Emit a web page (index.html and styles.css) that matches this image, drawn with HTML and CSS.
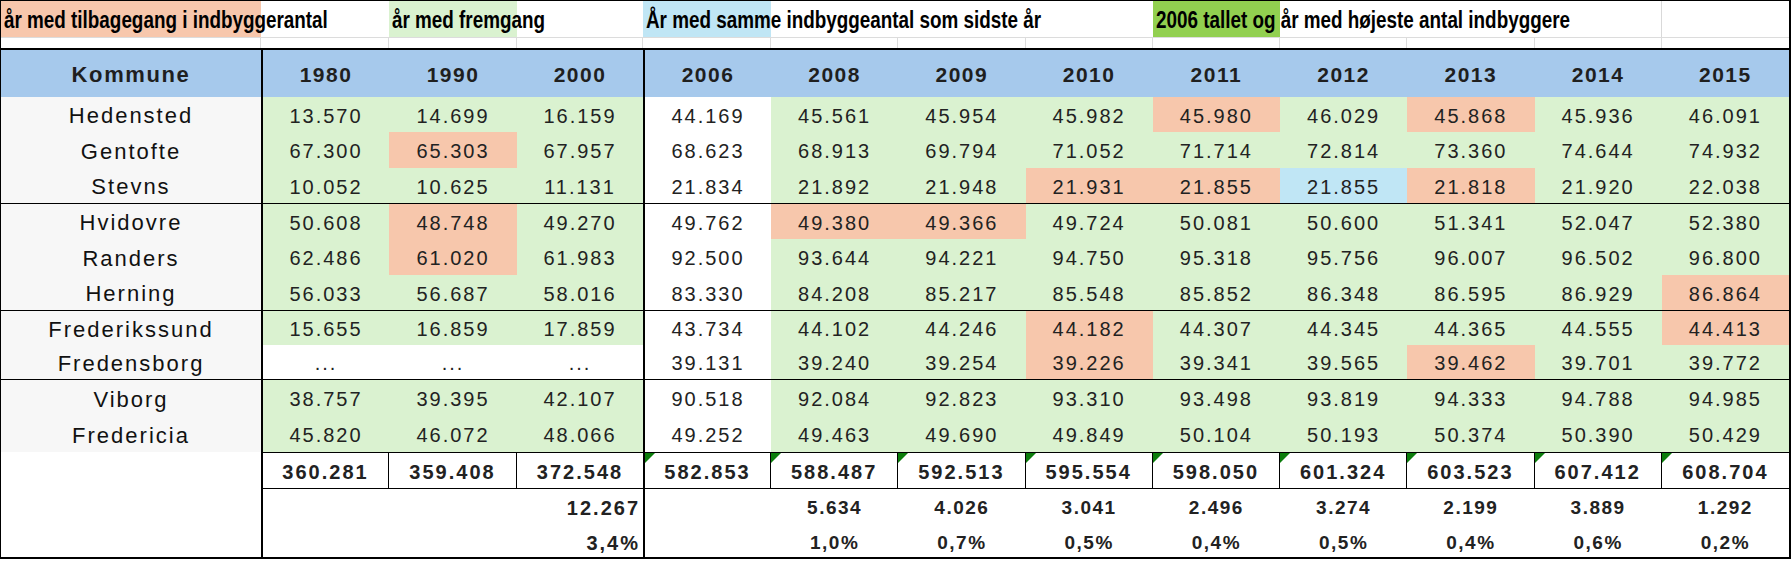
FILE: index.html
```html
<!DOCTYPE html>
<html lang="da">
<head>
<meta charset="utf-8">
<title>Indbyggertal</title>
<link rel="stylesheet" href="styles.css">
</head>
<body>
<div class="sheet">
  <div class="row legend">
    <div class="c lg fill-o"><span class="lt">år med tilbagegang i indbyggerantal</span></div>
    <div class="c lg"></div>
    <div class="c lg fill-g"><span class="lt">år med fremgang</span></div>
    <div class="c lg"></div>
    <div class="c lg fill-b"><span class="lt">År med samme indbyggeantal som sidste år</span></div>
    <div class="c lg"></div>
    <div class="c lg"></div>
    <div class="c lg"></div>
    <div class="c lg fill-bg"><span class="lt">2006 tallet og år med højeste antal indbyggere</span></div>
    <div class="c lg"></div>
    <div class="c lg"></div>
    <div class="c lg grid-r"></div>
    <div class="c lg"></div>
  </div>
  <div class="row gap">
    <div class="c"></div><div class="c"></div><div class="c"></div><div class="c"></div><div class="c"></div><div class="c"></div><div class="c"></div><div class="c"></div><div class="c"></div><div class="c"></div><div class="c"></div><div class="c"></div><div class="c"></div>
  </div>
  <div class="row t hd">
    <div class="c kom">Kommune</div>
    <div class="c">1980</div><div class="c">1990</div><div class="c">2000</div><div class="c">2006</div><div class="c">2008</div><div class="c">2009</div><div class="c">2010</div><div class="c">2011</div><div class="c">2012</div><div class="c">2013</div><div class="c">2014</div><div class="c">2015</div>
  </div>

  <div class="row t d h35">
    <div class="c name">Hedensted</div>
    <div class="c g">13.570</div><div class="c g">14.699</div><div class="c g">16.159</div><div class="c w">44.169</div><div class="c g">45.561</div><div class="c g">45.954</div><div class="c g">45.982</div><div class="c o">45.980</div><div class="c g">46.029</div><div class="c o">45.868</div><div class="c g">45.936</div><div class="c g">46.091</div>
  </div>
  <div class="row t d h36">
    <div class="c name">Gentofte</div>
    <div class="c g">67.300</div><div class="c o">65.303</div><div class="c g">67.957</div><div class="c w">68.623</div><div class="c g">68.913</div><div class="c g">69.794</div><div class="c g">71.052</div><div class="c g">71.714</div><div class="c g">72.814</div><div class="c g">73.360</div><div class="c g">74.644</div><div class="c g">74.932</div>
  </div>
  <div class="row t d h35">
    <div class="c name">Stevns</div>
    <div class="c g">10.052</div><div class="c g">10.625</div><div class="c g">11.131</div><div class="c w">21.834</div><div class="c g">21.892</div><div class="c g">21.948</div><div class="c o">21.931</div><div class="c o">21.855</div><div class="c b">21.855</div><div class="c o">21.818</div><div class="c g">21.920</div><div class="c g">22.038</div>
  </div>

  <div class="row t d grp h36">
    <div class="c name">Hvidovre</div>
    <div class="c g">50.608</div><div class="c o">48.748</div><div class="c g">49.270</div><div class="c w">49.762</div><div class="c o">49.380</div><div class="c o">49.366</div><div class="c g">49.724</div><div class="c g">50.081</div><div class="c g">50.600</div><div class="c g">51.341</div><div class="c g">52.047</div><div class="c g">52.380</div>
  </div>
  <div class="row t d h36">
    <div class="c name">Randers</div>
    <div class="c g">62.486</div><div class="c o">61.020</div><div class="c g">61.983</div><div class="c w">92.500</div><div class="c g">93.644</div><div class="c g">94.221</div><div class="c g">94.750</div><div class="c g">95.318</div><div class="c g">95.756</div><div class="c g">96.007</div><div class="c g">96.502</div><div class="c g">96.800</div>
  </div>
  <div class="row t d h35">
    <div class="c name">Herning</div>
    <div class="c g">56.033</div><div class="c g">56.687</div><div class="c g">58.016</div><div class="c w">83.330</div><div class="c g">84.208</div><div class="c g">85.217</div><div class="c g">85.548</div><div class="c g">85.852</div><div class="c g">86.348</div><div class="c g">86.595</div><div class="c g">86.929</div><div class="c o">86.864</div>
  </div>

  <div class="row t d grp h35">
    <div class="c name">Frederikssund</div>
    <div class="c g">15.655</div><div class="c g">16.859</div><div class="c g">17.859</div><div class="c w">43.734</div><div class="c g">44.102</div><div class="c g">44.246</div><div class="c o">44.182</div><div class="c g">44.307</div><div class="c g">44.345</div><div class="c g">44.365</div><div class="c g">44.555</div><div class="c o">44.413</div>
  </div>
  <div class="row t d h34">
    <div class="c name">Fredensborg</div>
    <div class="c w">...</div><div class="c w">...</div><div class="c w">...</div><div class="c w">39.131</div><div class="c g">39.240</div><div class="c g">39.254</div><div class="c o">39.226</div><div class="c g">39.341</div><div class="c g">39.565</div><div class="c o">39.462</div><div class="c g">39.701</div><div class="c g">39.772</div>
  </div>

  <div class="row t d grp h37">
    <div class="c name">Viborg</div>
    <div class="c g">38.757</div><div class="c g">39.395</div><div class="c g">42.107</div><div class="c w">90.518</div><div class="c g">92.084</div><div class="c g">92.823</div><div class="c g">93.310</div><div class="c g">93.498</div><div class="c g">93.819</div><div class="c g">94.333</div><div class="c g">94.788</div><div class="c g">94.985</div>
  </div>
  <div class="row t d h36">
    <div class="c name">Fredericia</div>
    <div class="c g">45.820</div><div class="c g">46.072</div><div class="c g">48.066</div><div class="c w">49.252</div><div class="c g">49.463</div><div class="c g">49.690</div><div class="c g">49.849</div><div class="c g">50.104</div><div class="c g">50.193</div><div class="c g">50.374</div><div class="c g">50.390</div><div class="c g">50.429</div>
  </div>

  <div class="row t tot">
    <div class="c blank"></div>
    <div class="c">360.281</div><div class="c">359.408</div><div class="c">372.548</div><div class="c tri">582.853</div><div class="c tri">588.487</div><div class="c tri">592.513</div><div class="c tri">595.554</div><div class="c tri">598.050</div><div class="c tri">601.324</div><div class="c tri">603.523</div><div class="c tri">607.412</div><div class="c tri">608.704</div>
  </div>
  <div class="row t diff d1">
    <div class="c"></div>
    <div class="c"></div><div class="c"></div><div class="c big">12.267</div><div class="c"></div><div class="c">5.634</div><div class="c">4.026</div><div class="c">3.041</div><div class="c">2.496</div><div class="c">3.274</div><div class="c">2.199</div><div class="c">3.889</div><div class="c">1.292</div>
  </div>
  <div class="row t diff d2">
    <div class="c"></div>
    <div class="c"></div><div class="c"></div><div class="c big">3,4%</div><div class="c"></div><div class="c">1,0%</div><div class="c">0,7%</div><div class="c">0,5%</div><div class="c">0,4%</div><div class="c">0,5%</div><div class="c">0,4%</div><div class="c">0,6%</div><div class="c">0,2%</div>
  </div>
</div>
</body>
</html>
```

FILE: styles.css
```css
html, body {
  margin: 0;
  padding: 0;
  background: #ffffff;
}

body {
  width: 1791px;
  height: 561px;
  overflow: hidden;
}

.sheet {
  width: 1791px;
  box-sizing: border-box;
  border-style: solid;
  border-color: #000;
  border-width: 1px 2px 2px 1px;
  font-family: "Liberation Sans", Arial, sans-serif;
  color: #222222;
}

.row {
  display: grid;
  grid-template-columns: 260px 128px 128px 126px 128px repeat(8, 1fr);
  box-sizing: border-box;
}

.c {
  display: flex;
  align-items: center;
  justify-content: center;
  box-sizing: border-box;
  white-space: nowrap;
  min-width: 0;
  position: relative;
}

/* legend row */
.legend {
  height: 36px;
}

.lg {
  justify-content: flex-start;
  padding: 3px 0 0 3px;
  font-family: "Liberation Sans", Arial, sans-serif;
  font-weight: bold;
  font-size: 23px;
  color: #000;
}

/* the legend font in the original is a narrow face */
.lt {
  display: inline-block;
  transform: scaleX(0.82);
  transform-origin: left center;
  position: relative;
  z-index: 1;
}

.fill-o { background: #F7C7AC; }
.fill-g { background: #DAF2D0; }
.fill-b { background: #C0E6F5; }
.fill-bg { background: #92D050; }

.grid-r {
  border-right: 1px solid #d9d9d9;
}

/* empty spacer row with excel gridlines */
.gap {
  height: 11px;
  border-top: 1px solid #dcdcdc;
}

.gap .c {
  border-right: 1px solid #dcdcdc;
}

.gap .c:last-child {
  border-right: 0;
}

/* thick column separators inside the table */
.t .c:nth-child(2),
.t .c:nth-child(5) {
  border-left: 2px solid #000;
}

/* header */
.hd {
  height: 49px;
  border-top: 2px solid #000;
  background: #A6C9EC;
}

.hd .c {
  font-weight: bold;
  font-size: 21px;
  letter-spacing: 1.5px;
  padding-top: 2px;
  color: #1f1f1f;
}

.hd .kom {
  font-size: 22px;
  letter-spacing: 1.6px;
}

/* data rows */
.h34 { height: 34px; }
.h35 { height: 35px; }
.h36 { height: 36px; }
.h37 { height: 37px; }

.grp {
  border-top: 1px solid #000;
}

.d .c {
  font-size: 20px;
  letter-spacing: 2px;
  padding-top: 3px;
}

.d .name {
  background: #F7F7F7;
  font-size: 22px;
  letter-spacing: 2px;
  color: #111;
}

.g { background: #DAF2D0; }
.o { background: #F7C7AC; }
.b { background: #C0E6F5; }
.w { background: #ffffff; }

/* totals */
.tot {
  height: 37px;
}

.tot .c {
  font-weight: bold;
  font-size: 20px;
  letter-spacing: 2px;
  padding-top: 3px;
  border-top: 1px solid #000;
  border-bottom: 1px solid #000;
  border-right: 1px solid #000;
}

.tot .c.blank {
  border-top: 0;
  border-bottom: 0;
  border-right: 0;
}

.tot .c:nth-child(4),
.tot .c:last-child {
  border-right: 0;
}

.tri::before {
  content: "";
  position: absolute;
  left: 0;
  top: 0;
  border-top: 10px solid #0b7d0b;
  border-right: 10px solid transparent;
}

/* differences */
.diff .c {
  font-weight: bold;
  font-size: 19px;
  letter-spacing: 1.5px;
}

.d1 {
  height: 33px;
}

.d1 .c {
  padding-top: 5px;
}

.d2 {
  height: 35px;
}

.d2 .c {
  padding-top: 7px;
}

.diff .big {
  justify-content: flex-end;
  padding-right: 3px;
  font-size: 20px;
  letter-spacing: 2px;
}
```
